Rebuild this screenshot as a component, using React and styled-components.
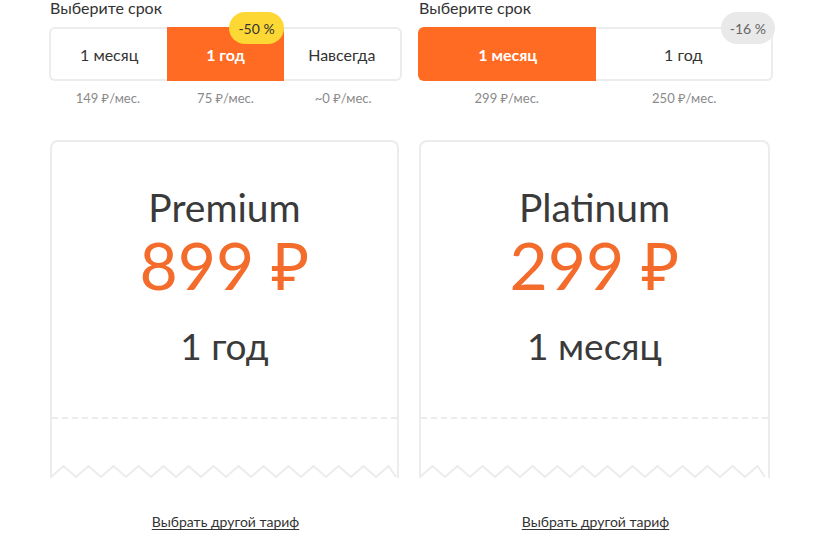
import React from 'react'
import styled, { createGlobalStyle } from 'styled-components'

const colors = {
  orange: '#ff6b22',
  price: '#f36c2c',
  border: '#ececec',
  text: '#333333',
  muted: '#8a8a8a',
  yellow: '#fdd835',
  gray: '#e9e9e9',
}

const GlobalStyle = createGlobalStyle`
  body {
    margin: 0;
    background: #ffffff;
    font-family: Lato, "Noto Sans", "Liberation Sans", sans-serif;
    color: ${colors.text};
  }
`

const Page = styled.div`
  display: grid;
  grid-template-columns: 353px 355px;
  column-gap: 16px;
  padding-left: 49px;
  width: 824px;
  height: 552px;
  box-sizing: border-box;
  overflow: hidden;
`

const Column = styled.div`
  display: flex;
  flex-direction: column;
`

const Title = styled.div`
  font-size: 16px;
  line-height: 20px;
  margin-top: -2px;
  padding-left: 1px;
`

const Segments = styled.div`
  display: flex;
  margin-top: 9px;
  height: 54px;
`

const Segment = styled.div`
  position: relative;
  flex: 1;
  display: flex;
  align-items: center;
  justify-content: center;
  box-sizing: border-box;
  font-size: 16px;
  font-weight: ${(p) => (p.$active ? 700 : 400)};
  color: ${(p) => (p.$active ? '#ffffff' : colors.text)};
  background: ${(p) => (p.$active ? colors.orange : '#ffffff')};
  border: 2px solid ${(p) => (p.$active ? colors.orange : colors.border)};
  border-left-width: ${(p) => (p.$first ? '2px' : '0')};
  border-right-width: ${(p) => (p.$last ? '2px' : '0')};
  border-radius: ${(p) =>
    p.$first ? '6px 0 0 6px' : p.$last ? '0 6px 6px 0' : '0'};
`

const Badge = styled.span`
  position: absolute;
  right: ${(p) => (p.$edge ? '-4px' : '0')};
  top: -17px;
  height: 32px;
  padding: 0 9px;
  border-radius: 16px;
  display: flex;
  align-items: center;
  font-size: 14px;
  font-weight: 400;
  color: ${(p) => (p.$tone === 'yellow' ? colors.text : '#666666')};
  background: ${(p) => (p.$tone === 'yellow' ? colors.yellow : colors.gray)};
`

const PriceRow = styled.div`
  display: flex;
  margin-top: 8px;
`

const PerMonth = styled.div`
  flex: 1;
  text-align: center;
  font-size: 13px;
  line-height: 18px;
  color: ${colors.muted};
`

const Card = styled.div`
  margin: 33px 3px 0 1px;
  border: 2px solid ${colors.border};
  border-bottom: none;
  border-radius: 8px 8px 0 0;
  display: flex;
  flex-direction: column;
`

const CardBody = styled.div`
  height: 277px;
  box-sizing: border-box;
  padding-top: 43px;
  border-bottom: 2px dashed ${colors.border};
  display: flex;
  flex-direction: column;
  align-items: center;
`

const PlanName = styled.div`
  font-size: 39px;
  line-height: 44px;
  color: #3a3a3a;
`

const PlanPrice = styled.div`
  font-size: 66px;
  line-height: 70px;
  margin-top: 1px;
  color: ${colors.price};
`

const PlanTerm = styled.div`
  font-size: 37px;
  line-height: 44px;
  margin-top: 24px;
  color: #3a3a3a;
`

const Tear = styled.div`
  height: 46px;
`

const Zigzag = styled.svg`
  display: block;
  margin: 0 -2px;
  height: 13px;
`

const OtherLink = styled.a`
  align-self: center;
  margin-top: 35px;
  font-size: 14px;
  color: ${colors.text};
  text-decoration: underline;
  text-underline-offset: 2px;
`

function ZigzagEdge({ width }) {
  const pts = []
  const period = 25
  for (let x = 0, i = 0; x <= width + period; x += period / 2, i++) {
    pts.push(`${Math.min(x, width) + 1},${i % 2 === 0 ? 12 : 1}`)
    if (x > width) break
  }
  return (
    <Zigzag width={width + 2} viewBox={`0 0 ${width + 2} 13`}>
      <polyline points={pts.join(' ')} fill="none" stroke={colors.border} strokeWidth="2" />
    </Zigzag>
  )
}

function Plan({ segments, name, price, term, width }) {
  return (
    <Column>
      <Title>Выберите срок</Title>
      <Segments>
        {segments.map((s, i) => (
          <Segment
            key={s.label}
            $active={s.active}
            $first={i === 0}
            $last={i === segments.length - 1}
          >
            {s.label}
            {s.badge && (
              <Badge $tone={s.badge.tone} $edge={i === segments.length - 1}>
                {s.badge.text}
              </Badge>
            )}
          </Segment>
        ))}
      </Segments>
      <PriceRow>
        {segments.map((s) => (
          <PerMonth key={s.label}>{s.per}</PerMonth>
        ))}
      </PriceRow>
      <Card>
        <CardBody>
          <PlanName>{name}</PlanName>
          <PlanPrice>{price}</PlanPrice>
          <PlanTerm>{term}</PlanTerm>
        </CardBody>
        <Tear />
        <ZigzagEdge width={width} />
      </Card>
      <OtherLink href="#">Выбрать другой тариф</OtherLink>
    </Column>
  )
}

export default function App() {
  return (
    <>
      <GlobalStyle />
      <Page>
        <Plan
          width={345}
          name="Premium"
          price="899 ₽"
          term="1 год"
          segments={[
            { label: '1 месяц', per: '149 ₽/мес.' },
            { label: '1 год', per: '75 ₽/мес.', active: true, badge: { text: '-50 %', tone: 'yellow' } },
            { label: 'Навсегда', per: '~0 ₽/мес.' },
          ]}
        />
        <Plan
          width={345}
          name="Platinum"
          price="299 ₽"
          term="1 месяц"
          segments={[
            { label: '1 месяц', per: '299 ₽/мес.', active: true },
            { label: '1 год', per: '250 ₽/мес.', badge: { text: '-16 %', tone: 'gray' } },
          ]}
        />
      </Page>
    </>
  )
}
